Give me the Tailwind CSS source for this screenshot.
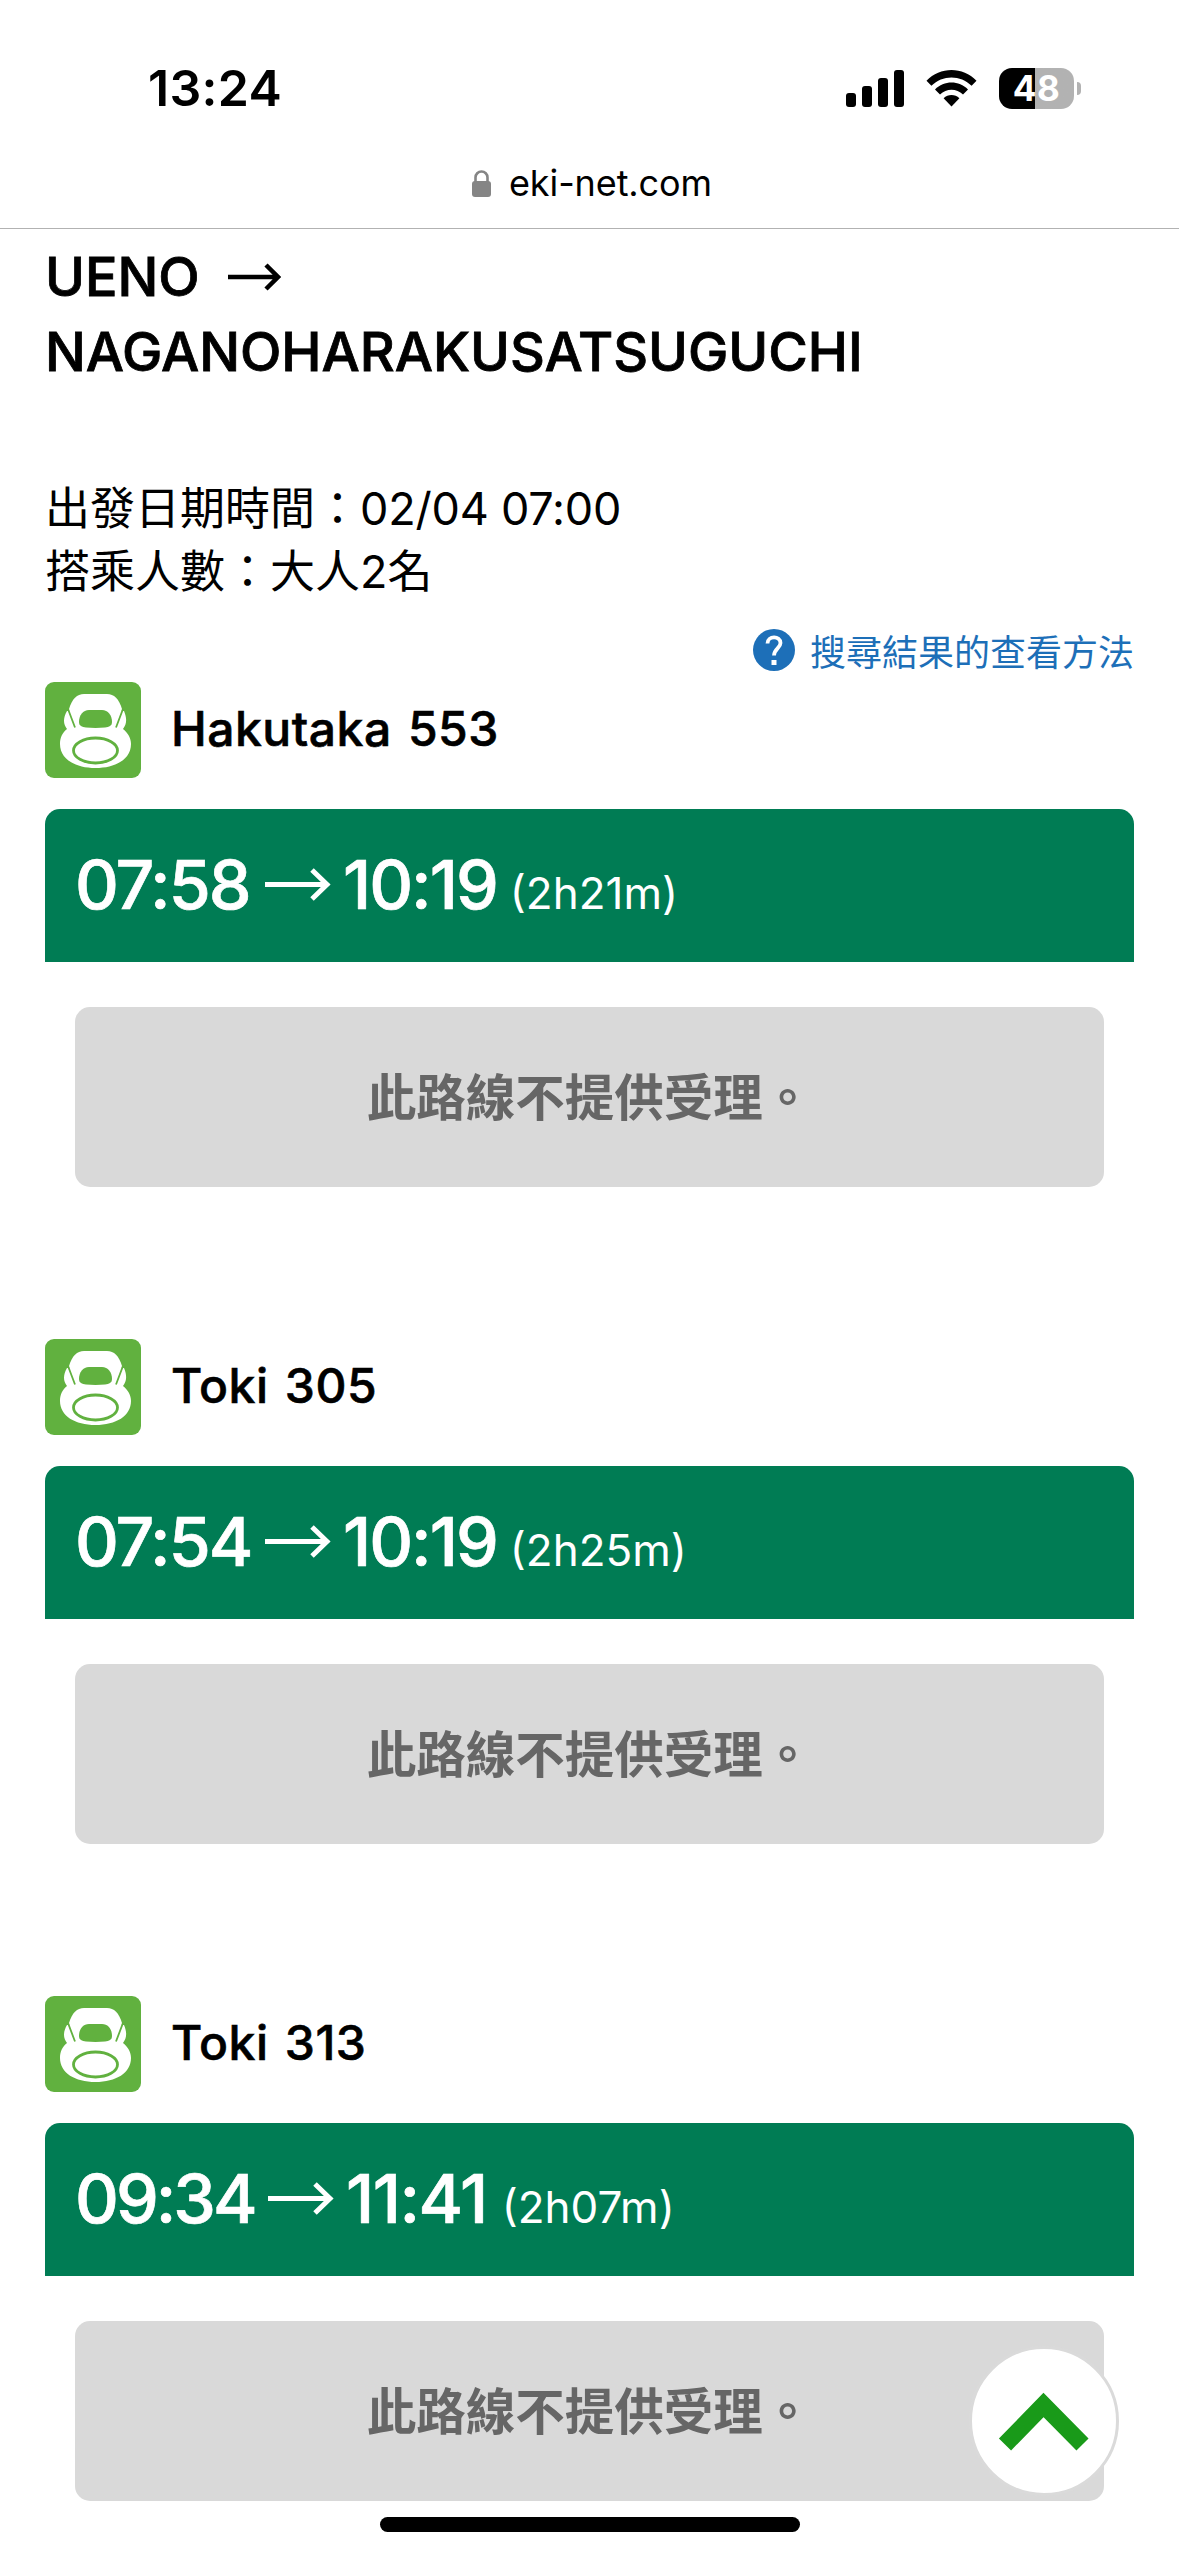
<!DOCTYPE html>
<html lang="zh-Hant">
<head>
  <meta charset="UTF-8">
  <title>eki-net.com</title>
  <script src="https://cdn.jsdelivr.net/npm/@tailwindcss/browser@4"></script>
</head>
<body class="relative h-[2556px] w-[1179px] overflow-hidden bg-white text-black font-[Inter,'Noto_Sans_CJK_TC',sans-serif]">

<!-- train icon, reused by every result -->
<svg class="hidden">
  <symbol id="train" viewBox="0 0 96 96">
    <rect width="96" height="96" rx="9" fill="#61b13f"/>
    <path d="M22 29C18 36 18 42 22 47c-5 4-7 9-7 15 0 15 15 24 35.500 24S86 77 86 62c0-6-3-11-8-15 4-5 4-11 1-18z" fill="#fff"/>
    <path d="M24 27C27 17 32 12 39 12h23c7 0 12 5 15 15l-1 6-6 13H31l-6-13z" fill="#fff"/>
    <path d="M23 27l7 18.500M78 27l-7 18.500" stroke="#61b13f" stroke-width="1.800" fill="none"/>
    <path d="M34 40c0-7 4-12 10-12h13c6 0 10 5 10 12 0 4-3 5-7 5.500-6 .6-13 .6-19 0-4-.5-7-1.500-7-5.500z" fill="#61b13f"/>
    <ellipse cx="50.500" cy="68.500" rx="22" ry="12.500" fill="#fff" stroke="#61b13f" stroke-width="2.800"/>
  </symbol>
</svg>

<header class="h-[229px] border-b border-[#b2b2b2]">
  <div class="flex h-[156px] items-center justify-between pt-5 pl-[148px] pr-[98px]">
    <div class="text-[50px] leading-none font-semibold tracking-[0.3px]">13:24</div>
    <div class="flex items-center">
      <svg class="h-[38px] w-[58px]" viewBox="0 0 58 38">
        <rect x="0" y="24" width="10" height="14" rx="3"/>
        <rect x="16" y="17" width="10" height="21" rx="3"/>
        <rect x="32" y="9" width="10" height="29" rx="3"/>
        <rect x="48" y="1" width="10" height="37" rx="3"/>
      </svg>
      <svg class="ml-[22px] h-[38px] w-[51px]" viewBox="0 0 51 38">
        <path d="M.5 11.800C14-2.600 37-2.600 50.500 11.800l-4.900 5C34.500 5.600 16.500 5.600 5.400 16.800z"/>
        <path d="M9 20.500c9-9.200 24-9.200 33 0l-5 5c-6.400-6.300-16.600-6.300-23 0z"/>
        <path d="M17.600 29.200c4.400-4.200 11.400-4.200 15.800 0L25.500 37.500z"/>
      </svg>
      <div class="ml-[22px] flex h-[41px] w-[75px] items-center justify-center rounded-[13px] bg-linear-to-r from-black from-48% to-[#b2b2b2] to-48% text-[35px] leading-none font-bold tracking-[0.5px] text-white">48</div>
      <div class="ml-[3px] h-[13px] w-1 rounded-r-full bg-[#b2b2b2]"></div>
    </div>
  </div>
  <div class="flex items-center justify-center gap-[18px] pl-[5px]">
    <svg class="h-[27px] w-[19px]" viewBox="0 0 19 27">
      <rect y="11" width="19" height="16" rx="3" fill="#858585"/>
      <path d="M3.500 12V7.500a6 6 0 0 1 12 0V12" fill="none" stroke="#858585" stroke-width="2.600"/>
    </svg>
    <div class="text-[36px] leading-[54px] tracking-[-0.1px]">eki-net.com</div>
  </div>
</header>

<main class="px-[45px]">
  <h1 class="pt-[10px] text-[54px] leading-[75px] font-medium tracking-[-0.05px] [-webkit-text-stroke:0.8px]">
    <div class="flex items-center">
      UENO
      <svg class="ml-[27px] h-7 w-[54px]" viewBox="0 0 54 28" fill="none" stroke="currentColor" stroke-width="4.500">
        <path d="M1 14h50M39 2l12 12-12 12"/>
      </svg>
    </div>
    <div>NAGANOHARAKUSATSUGUCHI</div>
  </h1>

  <div class="mt-[88px] text-[45px] leading-[63px]">
    <p>出發日期時間：<span class="tracking-[-0.2px]">02/04 07:00</span></p>
    <p>搭乘人數：大人2名</p>
  </div>

  <a class="mt-[20px] flex h-[54px] items-center justify-end gap-[15px] text-[36px] leading-[54px] text-[#1d6fb8]">
    <svg class="h-[42px] w-[42px]" viewBox="0 0 42 42">
      <circle cx="21" cy="21" r="21" fill="#1d6fb8"/>
      <path d="M14.500 14.500c0-8 13-8 13-.5 0 5-6.500 6-6.500 12.500" fill="none" stroke="#fff" stroke-width="3.800"/>
      <rect x="18.500" y="31" width="5" height="5" fill="#fff"/>
    </svg>
    <span class="pt-[5px]">搜尋結果的查看方法</span>
  </a>

  <section class="h-[657px]">
    <div class="flex h-24 items-center gap-[30px] mt-[5px]">
      <svg class="h-24 w-24"><use href="#train"/></svg>
      <h2 class="pb-[3px] text-[48px] leading-none font-medium tracking-[0.5px] [word-spacing:3px] [-webkit-text-stroke:0.6px]">Hakutaka 553</h2>
    </div>
    <div class="mt-[31px] flex h-[153px] items-baseline rounded-t-[15px] bg-[#007c54] px-[30px] pt-[35px] leading-[80px] text-white">
      <span class="w-[176px] text-[68px] font-medium tracking-[-2px] [-webkit-text-stroke:0.7px]">07:58</span>
      <svg class="ml-[14px] h-[41px] w-[66px] self-start mt-[20px]" viewBox="0 0 66 41" fill="none" stroke="currentColor" stroke-width="5"><path d="M0 20.500h62M47 6l15 14.500L47 35"/></svg>
      <span class="ml-[12px] text-[68px] font-medium tracking-[-2px] [-webkit-text-stroke:0.7px]">10:19</span>
      <span class="ml-[13px] text-[44px]">(2h21m)</span>
    </div>
    <div class="mx-[30px] mt-[45px] flex h-[180px] items-center justify-center rounded-[15px] bg-[#d9d9d9] pt-[3px] text-[49.5px] font-bold text-[#666]">此路線不提供受理。</div>
  </section>

  <section class="h-[657px]">
    <div class="flex h-24 items-center gap-[30px]">
      <svg class="h-24 w-24"><use href="#train"/></svg>
      <h2 class="pb-[3px] text-[48px] leading-none font-medium tracking-[0.5px] [word-spacing:3px] [-webkit-text-stroke:0.6px]">Toki 305</h2>
    </div>
    <div class="mt-[31px] flex h-[153px] items-baseline rounded-t-[15px] bg-[#007c54] px-[30px] pt-[35px] leading-[80px] text-white">
      <span class="w-[176px] text-[68px] font-medium tracking-[-2px] [-webkit-text-stroke:0.7px]">07:54</span>
      <svg class="ml-[14px] h-[41px] w-[66px] self-start mt-[20px]" viewBox="0 0 66 41" fill="none" stroke="currentColor" stroke-width="5"><path d="M0 20.500h62M47 6l15 14.500L47 35"/></svg>
      <span class="ml-[12px] text-[68px] font-medium tracking-[-2px] [-webkit-text-stroke:0.7px]">10:19</span>
      <span class="ml-[13px] text-[44px]">(2h25m)</span>
    </div>
    <div class="mx-[30px] mt-[45px] flex h-[180px] items-center justify-center rounded-[15px] bg-[#d9d9d9] pt-[3px] text-[49.5px] font-bold text-[#666]">此路線不提供受理。</div>
  </section>

  <section>
    <div class="flex h-24 items-center gap-[30px]">
      <svg class="h-24 w-24"><use href="#train"/></svg>
      <h2 class="pb-[3px] text-[48px] leading-none font-medium tracking-[0.5px] [word-spacing:3px] [-webkit-text-stroke:0.6px]">Toki 313</h2>
    </div>
    <div class="mt-[31px] flex h-[153px] items-baseline rounded-t-[15px] bg-[#007c54] px-[30px] pt-[35px] leading-[80px] text-white">
      <span class="w-[179px] text-[68px] font-medium tracking-[-3px] [-webkit-text-stroke:0.7px]">09:34</span>
      <svg class="ml-[14px] h-[41px] w-[66px] self-start mt-[20px]" viewBox="0 0 66 41" fill="none" stroke="currentColor" stroke-width="5"><path d="M0 20.500h62M47 6l15 14.500L47 35"/></svg>
      <span class="ml-[12px] text-[68px] font-medium tracking-[-1.500px] [-webkit-text-stroke:0.7px]">11:41</span>
      <span class="ml-[15px] text-[44px]">(2h07m)</span>
    </div>
    <div class="mx-[30px] mt-[45px] flex h-[180px] items-center justify-center rounded-[15px] bg-[#d9d9d9] pt-[3px] text-[49.5px] font-bold text-[#666]">此路線不提供受理。</div>
  </section>
</main>

<!-- back to top -->
<button class="absolute top-[2346px] left-[969px] h-[150px] w-[150px] rounded-full border-[3px] border-[#dadada] bg-white">
  <svg class="h-36 w-36" viewBox="0 0 144 144"><path d="M33 95.500l38.500-39.500 39 39.500" fill="none" stroke="#199a19" stroke-width="17"/></svg>
</button>

<!-- home indicator -->
<div class="absolute bottom-[24px] left-[380px] h-[15px] w-[420px] rounded-full bg-black"></div>
</body>
</html>
